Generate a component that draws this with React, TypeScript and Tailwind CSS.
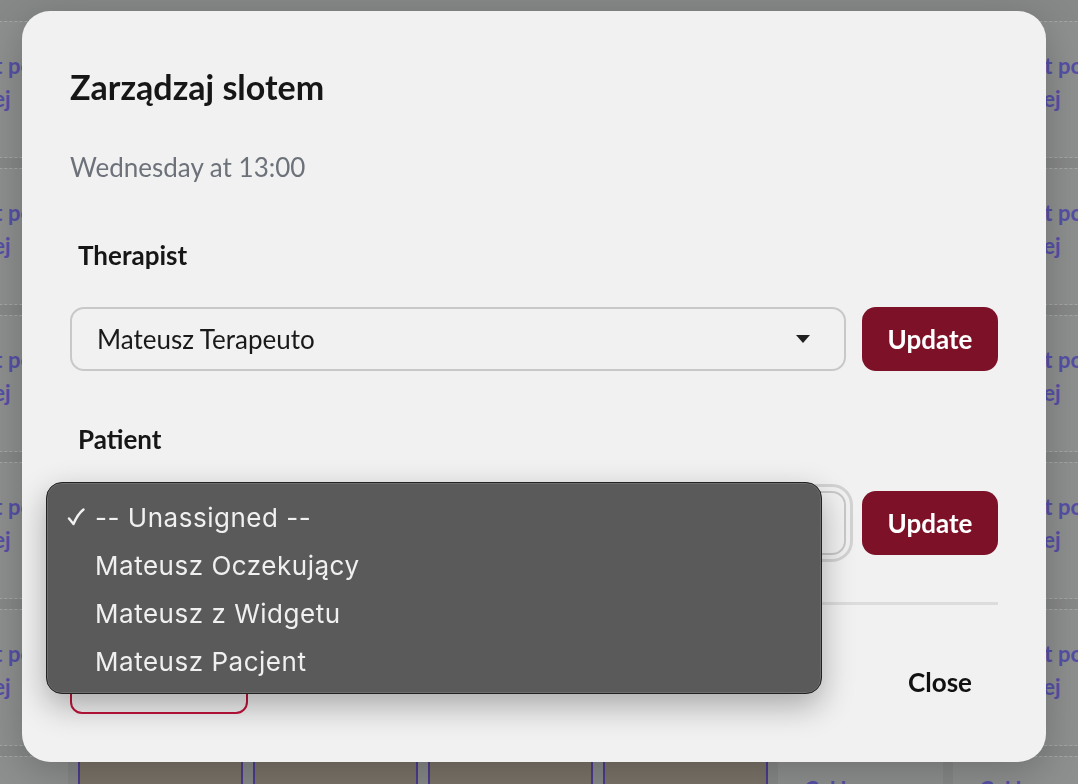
import React from 'react';

const columns = [0, 1, 2, 3, 4, 5, 6];
const rows = [0, 1, 2, 3, 4];
const patients = ['-- Unassigned --', 'Mateusz Oczekujący', 'Mateusz z Widgetu', 'Mateusz Pacjent'];

// only the outer columns peek out from behind the dialog
const SlotCell = ({ labelled }: { labelled: boolean }) => (
  <div className="h-[137px] mb-[10px] bg-[#8e8f8f] border-y border-dashed border-[#a5a6a6] pl-0 pt-[27px] text-[22px] leading-[33px] font-bold text-[#5650a6] whitespace-nowrap overflow-hidden">
    {labelled && (
      <>
        <div>Dodaj slot pod</div>
        <div>salą wolnej</div>
      </>
    )}
  </div>
);

const BottomCell = ({ booked }: { booked: boolean }) =>
  booked ? (
    <div className="mt-[10px] h-[40px] bg-[#7b7369] border-2 border-[#4c3b8f] rounded-t-md" />
  ) : (
    <div className="h-[50px] bg-[#8e8f8f] border-t border-dashed border-[#a5a6a6] pl-[26px] pt-[16px] text-[22px] font-bold text-[#5650a6] whitespace-nowrap overflow-hidden">
      Cel.lu
    </div>
  );

const Caret = () => (
  <svg width="14" height="8" viewBox="0 0 14 8" className="shrink-0">
    <path d="M0 0 H14 L7 8 Z" fill="#1f1f1f" />
  </svg>
);

const Check = () => (
  <svg width="18" height="18" viewBox="0 0 18 18" fill="none">
    <path d="M2 10.5 L6.5 16 C9 10 12 5 16.5 1.5" stroke="#f2f2f2" strokeWidth="2.4" strokeLinecap="round" strokeLinejoin="round" />
  </svg>
);

const UpdateButton = () => (
  <button className="w-[136px] h-16 shrink-0 rounded-[14px] bg-[#7d1128] text-white text-[26px] font-bold">
    Update
  </button>
);

const SelectBox = ({ value, focused }: { value: string; focused?: boolean }) => (
  <div
    className={
      focused
        ? 'w-[776px] h-16 shrink-0 flex items-center justify-between pl-[25px] pr-[34px] rounded-[14px] border-2 border-[#c8c8c8] outline-[3px] outline-solid outline-[#d2d2d2] outline-offset-[4px] text-[26px] text-[#1a1a1a]'
        : 'w-[776px] h-16 shrink-0 flex items-center justify-between pl-[25px] pr-[34px] rounded-[14px] border-2 border-[#c8c8c8] text-[26px] text-[#1a1a1a]'
    }
  >
    <span>{value}</span>
    <Caret />
  </div>
);

export default function App() {
  return (
    <div className="relative h-[784px] w-[1078px] overflow-hidden bg-[#878888] font-[family-name:Lato,sans-serif]">
      {/* calendar behind the dialog */}
      <div className="ml-[-97px] pt-[21px] flex gap-[10px]">
        {columns.map((c) => (
          <div key={c} className="w-[165px] shrink-0">
            {rows.map((r) => (
              <SlotCell key={r} labelled={c === 0 || c === 6} />
            ))}
            <BottomCell booked={c >= 1 && c <= 4} />
          </div>
        ))}
      </div>

      {/* dialog */}
      <div className="fixed inset-0 pl-[22px] pt-[11px]">
        <div className="w-[1024px] h-[751px] rounded-[28px] bg-[#f1f1f1] shadow-[0_10px_40px_rgba(0,0,0,0.22)] px-12 pt-[55px] text-[#161616]">
          <h2 className="text-[34px] leading-[41px] font-bold">Zarządzaj slotem</h2>
          <p className="mt-[45px] text-[26px] leading-[31px] text-[#6d727a]">Wednesday at 13:00</p>

          <div className="mt-[57px]">
            <div className="pl-2 text-[26px] leading-[31px] font-bold">Therapist</div>
            <div className="mt-[36px] flex gap-4">
              <SelectBox value="Mateusz Terapeuto" />
              <UpdateButton />
            </div>
          </div>

          <div className="mt-[53px]">
            <div className="pl-2 text-[26px] leading-[31px] font-bold">Patient</div>
            <div className="mt-[36px] flex gap-4">
              <div className="relative">
                <SelectBox value="-- Unassigned --" focused />
                <div className="absolute left-[-24px] top-[-9px] z-10 w-[776px] h-[212px] pt-[10px] rounded-[16px] bg-[#5a5a5a] border border-[#222] shadow-[inset_0_0_0_1px_rgba(255,255,255,0.12),0_12px_32px_rgba(0,0,0,0.3)] font-[family-name:Inter,sans-serif] text-[26px] text-[#f0f0f0] tracking-[0.02em]">
                  {patients.map((p, i) => (
                    <div key={p} className="h-12 flex items-center">
                      <div className="w-[48px] pl-[20px] shrink-0">{i === 0 && <Check />}</div>
                      <span>{p}</span>
                    </div>
                  ))}
                </div>
              </div>
              <UpdateButton />
            </div>
          </div>

          <div className="mt-[47px] h-[3px] bg-[#dcdcdc]" />

          <div className="mt-[45px] flex items-center justify-between">
            <button className="w-[178px] h-16 rounded-xl border-2 border-[#c0143c] text-[#c0143c] text-[26px] font-bold">
              Usuń slot
            </button>
            <button className="h-16 px-[26px] text-[26px] font-bold text-[#111]">Close</button>
          </div>
        </div>
      </div>
    </div>
  );
}
